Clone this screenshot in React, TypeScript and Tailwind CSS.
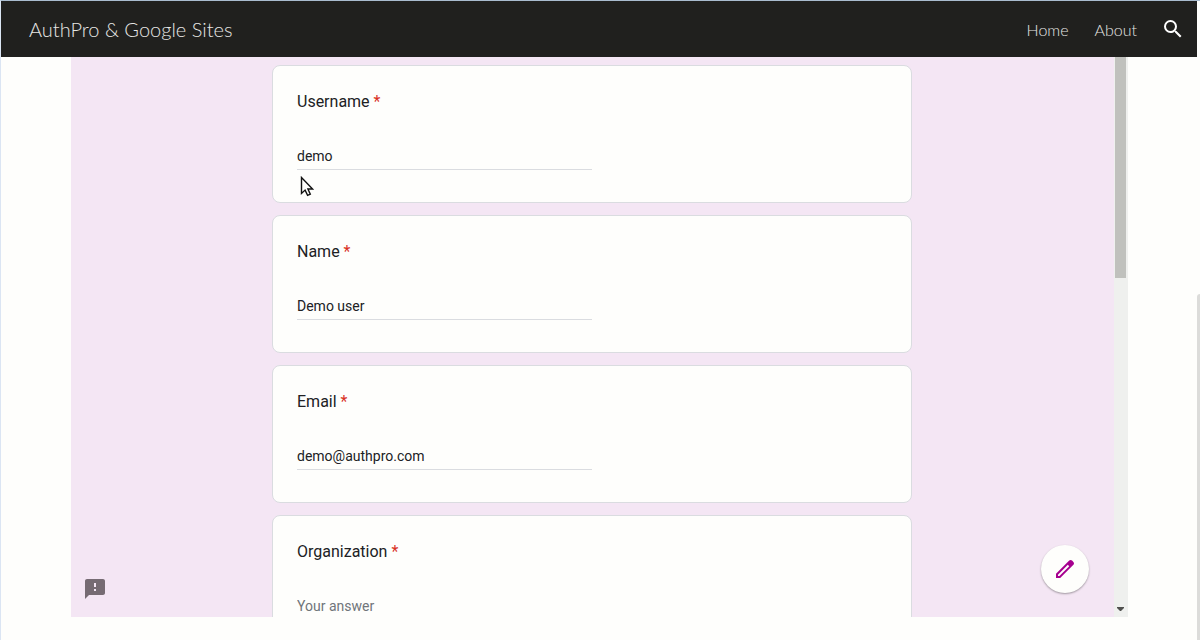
import { useState } from "react";

type Field = {
  id: string;
  label: string;
  value: string;
};

const initialFields: Field[] = [
  { id: "username", label: "Username", value: "demo" },
  { id: "name", label: "Name", value: "Demo user" },
  { id: "email", label: "Email", value: "demo@authpro.com" },
  { id: "organization", label: "Organization", value: "" },
];

function Header() {
  return (
    <header className="flex h-14 shrink-0 items-center justify-between bg-[#20201e] pr-3 pl-7 font-['Lato',sans-serif] font-light text-[#e6e6e4]">
      <a href="#top" className="text-xl">
        AuthPro &amp; Google Sites
      </a>
      <div className="flex items-center gap-6 pt-0.5 text-base">
        <nav className="flex gap-[26px]">
          <a href="#home">Home</a>
          <a href="#about">About</a>
        </nav>
        <button type="button" aria-label="Search" className="mb-0.5 text-white">
          <svg viewBox="0 0 24 24" className="size-6 fill-current">
            <path d="M15.5 14h-.79l-.28-.27A6.471 6.471 0 0 0 16 9.5 6.5 6.5 0 1 0 9.5 16c1.61 0 3.09-.59 4.23-1.57l.27.28v.79l5 4.99L20.49 19l-4.99-5zm-6 0C7.01 14 5 11.99 5 9.5S7.01 5 9.5 5 14 7.01 14 9.5 11.99 14 9.5 14z" />
          </svg>
        </button>
      </div>
    </header>
  );
}

function QuestionCard({
  field,
  onChange,
}: {
  field: Field;
  onChange: (value: string) => void;
}) {
  return (
    <div className="h-[138px] shrink-0 rounded-lg border border-[#dadce0] bg-[#fefefc] px-6 pt-6 text-[#202124]">
      <label htmlFor={field.id} className="block text-base leading-6">
        {field.label} <span className="text-[#d93025]">*</span>
      </label>
      <input
        id={field.id}
        type="text"
        value={field.value}
        placeholder="Your answer"
        onChange={(event) => onChange(event.target.value)}
        className="mt-7 block h-7 w-1/2 border-b border-[#dadce0] bg-transparent text-sm outline-none placeholder:text-[#70757a]"
      />
    </div>
  );
}

function FormScrollbar() {
  return (
    <div className="flex w-[14px] shrink-0 flex-col items-center justify-between bg-[#eff0ee] pr-px">
      <div className="h-[221px] w-[11px] bg-[#c0c1bd]" />
      <svg viewBox="0 0 7 4" className="mb-[6px] h-1 w-[7px] fill-[#50504e]">
        <path d="M0 0h7v1L4 4H3L0 1z" />
      </svg>
    </div>
  );
}

function Pointer() {
  return (
    <svg viewBox="0 0 14 21" className="pointer-events-none absolute top-[119px] left-[229px] h-[21px] w-[14px]">
      <path
        d="M1.5 1.5v16l3.600-3.400 2.500 5.200 2.700-1.200-2.400-5.100h4.700z"
        fill="#fefefc"
        stroke="#111111"
        strokeWidth="1.4"
      />
    </svg>
  );
}

export default function App() {
  const [fields, setFields] = useState(initialFields);

  const update = (id: string, value: string) =>
    setFields((current) =>
      current.map((field) => (field.id === id ? { ...field, value } : field)),
    );

  return (
    <div className="flex h-screen overflow-hidden border-t border-l border-t-[#a9bccf] border-l-[#dbe5f3] bg-[#fefefc] font-['Roboto',sans-serif]">
      <div className="flex min-w-0 flex-1 flex-col">
        <Header />
        <main className="relative mr-[69px] mb-[23px] ml-[70px] flex min-h-0 flex-1 overflow-hidden">
          <form className="flex min-w-0 flex-1 flex-col bg-[#f4e6f4] pt-2 pr-px">
            <div className="mx-auto flex w-full max-w-[640px] flex-col gap-3">
              {fields.map((field) => (
                <QuestionCard
                  key={field.id}
                  field={field}
                  onChange={(value) => update(field.id, value)}
                />
              ))}
            </div>
          </form>
          <FormScrollbar />
          <Pointer />
          <button
            type="button"
            aria-label="Report a problem"
            className="absolute bottom-4 left-3 text-[#766b73]"
          >
            <svg viewBox="0 0 24 24" className="size-6 fill-current">
              <path d="M20 2H4c-1.1 0-1.99.9-1.99 2L2 22l4-4h14c1.1 0 2-.9 2-2V4c0-1.1-.9-2-2-2zm-7 12h-2v-2h2v2zm0-4h-2V6h2v4z" />
            </svg>
          </button>
          <button
            type="button"
            aria-label="Edit form"
            className="absolute right-[39px] bottom-6 flex size-12 items-center justify-center rounded-full bg-[#fefefc] text-[#a6008f] shadow-[0_1px_2px_rgba(0,0,0,0.35)]"
          >
            <svg viewBox="0 0 24 24" className="size-6 fill-current">
              <path d="M20.41 4.94l-1.35-1.35c-.78-.78-2.05-.78-2.83 0L3 16.82V21h4.18L20.41 7.77c.79-.78.79-2.05 0-2.83zM6.41 19.06L5 19v-1.36l9.82-9.82 1.41 1.41-9.82 9.83z" />
            </svg>
          </button>
        </main>
      </div>
      <div className="flex w-[3px] shrink-0 flex-col justify-end">
        <div className="h-[54.2%] rounded-tl-sm bg-[#dcdcda]" />
      </div>
    </div>
  );
}
